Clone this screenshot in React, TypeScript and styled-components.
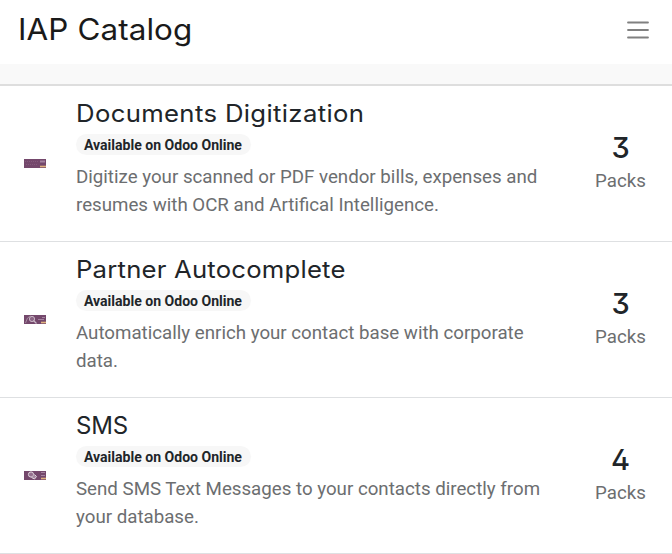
import React from "react";
import styled, { createGlobalStyle } from "styled-components";

const GlobalStyle = createGlobalStyle`
  * { box-sizing: border-box; }
  body { margin: 0; background: #fff; color: #212529; font-family: Roboto, sans-serif; font-size: 18.72px; line-height: 28px; }
  h1, h2, p { margin: 0; font-weight: 400; }
`;

const Page = styled.div`
  width: 100%;
  height: 554px;
  overflow: hidden;
`;

const Header = styled.header`
  display: flex;
  align-items: center;
  justify-content: space-between;
  height: 64px;
  padding: 0 23px 6px 18px;
`;

const Brand = styled.h1`
  font: 400 29.5px/36px Inter, sans-serif;
  letter-spacing: 0.1px;
  transform: scaleX(1.064);
  transform-origin: left center;
  color: #1a1a1a;
  white-space: nowrap;
`;

const MenuButton = styled.button`
  display: flex;
  margin-top: 2px;
  padding: 0;
  border: 0;
  background: none;
`;

const Band = styled.div`
  height: 22px;
  background: #f9f9f9;
  border-bottom: 2px solid #dedede;
`;

const Row = styled.article`
  display: grid;
  grid-template-columns: 22px 1fr 51px;
  column-gap: 30px;
  height: 156px;
  padding: 12px 26px 0 24px;
  border-bottom: 1px solid #dee0e2;
`;

const Thumb = styled.svg`
  display: block;
  margin-top: 61px;
`;

const Details = styled.div`
  display: flex;
  flex-direction: column;
  align-items: flex-start;
`;

const Title = styled.h2<{ $spacing: number; $stretch: number }>`
  margin-top: 1px;
  font: 400 24px/30px Inter, sans-serif;
  letter-spacing: ${(p) => p.$spacing}px;
  transform: scaleX(${(p) => p.$stretch});
  transform-origin: left center;
  white-space: nowrap;
`;

const Badge = styled.span`
  height: 21px;
  margin-top: 5px;
  padding: 0 8.8px 0 8px;
  border-radius: 11px;
  background: #f7f7f7;
  font-size: 14.06px;
  font-weight: 700;
  line-height: 22px;
  white-space: nowrap;
`;

const Description = styled.p`
  margin-top: 8px;
  color: #6c6e70;
  white-space: pre;
`;

const Packs = styled.div`
  display: flex;
  flex-direction: column;
  align-items: center;
  padding-top: 32px;
`;

const Count = styled.span`
  margin-bottom: 1px;
  font: 500 29px/36px Inter, sans-serif;
  font-feature-settings: "cv09", "cv02";
`;

const PacksLabel = styled.span`
  color: #6c6e70;
`;

type Art = "document" | "search" | "chat";

function Thumbnail({ art }: { art: Art }) {
  return (
    <Thumb width="22" height="9" viewBox="0 0 22 9" aria-hidden="true">
      <rect width="22" height="9" fill="#74486c" />
      {art === "document" && (
        <>
          <path d="M1 2.5h14M2 5.5h12" stroke="#845a7c" strokeDasharray="1 1" />
          <path d="M16 2.5h5" stroke="#a583a0" strokeWidth="2" />
          <path d="M16 7.5h6" stroke="#dfb27e" strokeWidth="1.6" />
        </>
      )}
      {art === "search" && (
        <>
          <path d="M1.5 8l2-5 3-2" stroke="#a58aa0" fill="none" />
          <circle cx="8" cy="4" r="2.6" stroke="#c9b7c6" fill="#8b6685" />
          <path d="M9.5 5.5l3 3" stroke="#c9b7c6" strokeWidth="1.3" />
          <path d="M14 4.5h6M18 2.5h3" stroke="#a583a0" />
          <path d="M17 7.5h5" stroke="#dfb27e" strokeWidth="1.6" />
        </>
      )}
      {art === "chat" && (
        <>
          <circle cx="7" cy="3.5" r="2.6" stroke="#e0d5de" fill="#93708e" />
          <path d="M7.5 6.5l3 1.5 2-2.5-2-2" stroke="#e0d5de" fill="#a78ba3" />
          <path d="M17 1.5h4M17 4.5h4" stroke="#a583a0" />
          <path d="M17 7.5h5" stroke="#dfb27e" strokeWidth="1.6" />
        </>
      )}
    </Thumb>
  );
}

const services: { title: string; spacing: number; stretch: number; text: string; packs: number; art: Art }[] = [
  {
    title: "Documents Digitization",
    spacing: 0.33,
    stretch: 1.07,
    text: "Digitize your scanned or PDF vendor bills, expenses and\nresumes with OCR and Artifical Intelligence.",
    packs: 3,
    art: "document",
  },
  {
    title: "Partner Autocomplete",
    spacing: 0.2,
    stretch: 1.07,
    text: "Automatically enrich your contact base with corporate\ndata.",
    packs: 3,
    art: "search",
  },
  {
    title: "SMS",
    spacing: -0.2,
    stretch: 1,
    text: "Send SMS Text Messages to your contacts directly from\nyour database.",
    packs: 4,
    art: "chat",
  },
];

export default function App() {
  return (
    <>
      <GlobalStyle />
      <Page>
        <Header>
          <Brand>IAP Catalog</Brand>
          <MenuButton aria-label="Menu">
            <svg width="22" height="20" viewBox="0 0 22 20" fill="none" stroke="#808080" strokeWidth="1.8" strokeLinecap="round">
              <path d="M1 2.5h20M1 10h20M1 17.5h20" />
            </svg>
          </MenuButton>
        </Header>
        <Band />
        <main>
          {services.map((s) => (
            <Row key={s.title}>
              <Thumbnail art={s.art} />
              <Details>
                <Title $spacing={s.spacing} $stretch={s.stretch}>{s.title}</Title>
                <Badge>Available on Odoo Online</Badge>
                <Description>{s.text}</Description>
              </Details>
              <Packs>
                <Count>{s.packs}</Count>
                <PacksLabel>Packs</PacksLabel>
              </Packs>
            </Row>
          ))}
        </main>
      </Page>
    </>
  );
}
